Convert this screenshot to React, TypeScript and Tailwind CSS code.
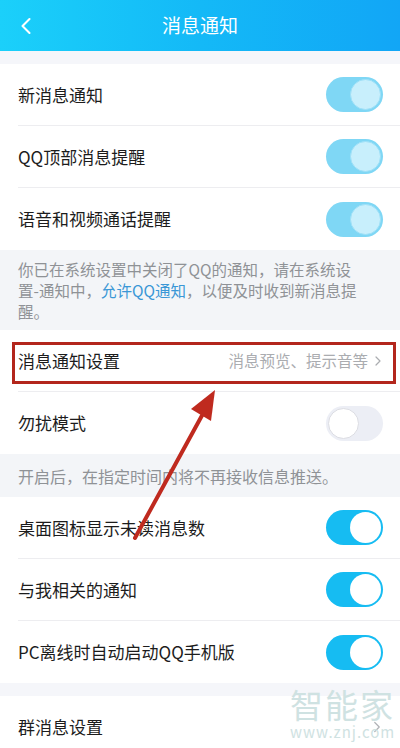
import { ChevronLeft, ChevronRight } from 'lucide-react'

const font = { fontFamily: '"Noto Sans CJK SC", "Noto Sans", sans-serif' }

function Toggle({ mode }: { mode: 'dim' | 'on' | 'off' }) {
  if (mode === 'off') {
    return (
      <div className="flex h-[35px] w-[57px] items-center rounded-full bg-[#eceef5] p-[2px]">
        <div className="h-[31px] w-[31px] rounded-full border border-[#dcdde3] bg-white" />
      </div>
    )
  }
  const track = mode === 'dim' ? 'bg-[#7fd7f5]' : 'bg-[#16bcf2]'
  const knob = mode === 'dim' ? 'bg-[#c8effc] border border-[#9fe0f7]' : 'bg-white'
  return (
    <div className={`flex h-[35px] w-[57px] items-center justify-end rounded-full p-[2px] ${track}`}>
      <div className={`h-[31px] w-[31px] rounded-full ${knob}`} />
    </div>
  )
}

function Row({ label, toggle, last }: { label: string; toggle: 'dim' | 'on' | 'off'; last?: boolean }) {
  return (
    <div className="bg-white pl-[18px]">
      <div
        className={`flex h-[62px] items-center justify-between pr-[17px] ${last ? '' : 'border-b border-[#ededf0]'}`}
      >
        <span className="text-[17px] text-[#1c1c1c]">{label}</span>
        <Toggle mode={toggle} />
      </div>
    </div>
  )
}

export default function App() {
  return (
    <div className="relative h-[748px] w-[400px] overflow-hidden bg-[#f5f6fa]" style={font}>
      <div className="relative flex h-[51px] items-center justify-center bg-gradient-to-r from-[#1bd0fa] via-[#14b9f7] to-[#12a6f6]">
        <ChevronLeft className="absolute left-[12px] top-[12px] text-white" size={28} strokeWidth={1.8} />
        <span className="text-[19px] text-white">消息通知</span>
      </div>

      <div className="h-[13px]" />

      <Row label="新消息通知" toggle="dim" />
      <Row label="QQ顶部消息提醒" toggle="dim" />
      <Row label="语音和视频通话提醒" toggle="dim" last />

      <div className="h-[80px] bg-[#f3f5f8] pl-[18px] pr-[42px] pt-[9px] text-[15.5px] leading-[21px] text-[#8f9296]">
        你已在系统设置中关闭了QQ的通知，请在系统设置-通知中，<span className="text-[#3a97d6]">允许QQ通知</span>，以便及时收到新消息提醒。
      </div>

      <div className="relative bg-white pl-[18px]">
        <div className="flex h-[62px] items-center justify-between border-b border-[#ededf0] pr-[14px]">
          <span className="text-[17px] text-[#1c1c1c]">消息通知设置</span>
          <span className="flex items-center text-[15.5px] text-[#aaacb0]">
            消息预览、提示音等
            <ChevronRight size={16} strokeWidth={1.8} className="ml-[2px] text-[#aaacb0]" />
          </span>
        </div>
        <div className="absolute left-[12px] right-[4px] top-[12px] h-[42px] border-[3px] border-[#b3261c]" />
      </div>

      <Row label="勿扰模式" toggle="off" last />

      <div className="flex h-[43px] items-center bg-[#f3f5f8] px-[18px] text-[16px] text-[#8f9296]">
        开启后，在指定时间内将不再接收信息推送。
      </div>

      <Row label="桌面图标显示未读消息数" toggle="on" />
      <Row label="与我相关的通知" toggle="on" />
      <Row label="PC离线时自动启动QQ手机版" toggle="on" last />

      <div className="h-[13px]" />

      <div className="bg-white pl-[18px]">
        <div className="flex h-[62px] items-center justify-between pr-[14px]">
          <span className="text-[17px] text-[#1c1c1c]">群消息设置</span>
          <ChevronRight size={18} strokeWidth={1.6} className="text-[#b0b2b6]" />
        </div>
      </div>

      <svg className="pointer-events-none absolute left-0 top-0" width="400" height="748">
        <line x1="135" y1="538" x2="205" y2="410" stroke="#bf2a1f" strokeWidth="4" strokeLinecap="round" />
        <polygon points="215,390 211,421 191,409" fill="#bf2a1f" />
      </svg>

      <div className="pointer-events-none absolute left-[290px] top-[686px] flex flex-col items-center text-[#cfe2e2]">
        <span className="text-[33px] leading-[36px] tracking-[2px]">智能家</span>
        <span className="text-[15px] leading-[20px] tracking-[1px]">www.znj.com</span>
      </div>
    </div>
  )
}
